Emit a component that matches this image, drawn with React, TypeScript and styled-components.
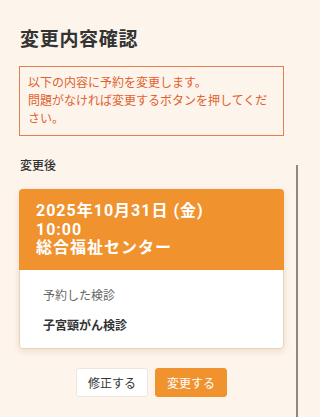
import React, { FC } from 'react';
import styled, { createGlobalStyle } from 'styled-components';

const GlobalStyle = createGlobalStyle`
  html, body {
    margin: 0;
    padding: 0;
    background: #fdf4ec;
  }
  body {
    font-family: "Roboto", "Noto Sans CJK JP", sans-serif;
    color: #333333;
  }
`;

interface ReservationCardProps {
  date: string;
  time: string;
  place: string;
  label: string;
  exam: string;
}

const ReservationCard: FC<ReservationCardProps> = ({ date, time, place, label, exam }) => {
  return (
    <Card>
      <CardHeader>
        <HeaderLine>{date}</HeaderLine>
        <HeaderLine>{time}</HeaderLine>
        <HeaderLine>{place}</HeaderLine>
      </CardHeader>
      <CardBody>
        <BodyLabel>{label}</BodyLabel>
        <BodyValue>{exam}</BodyValue>
      </CardBody>
    </Card>
  );
};

const App: FC = () => {
  return (
    <>
      <GlobalStyle />
      <Page>
        <Title>変更内容確認</Title>
        <Notice>
          以下の内容に予約を変更します。
          <br />
          問題がなければ変更するボタンを押してください。
        </Notice>
        <SectionLabel>変更後</SectionLabel>
        <ReservationCard
          date="2025年10月31日 (金)"
          time="10:00"
          place="総合福祉センター"
          label="予約した検診"
          exam="子宮頸がん検診"
        />
        <ButtonRow>
          <Button>修正する</Button>
          <Button primary>変更する</Button>
        </ButtonRow>
        <ScrollThumb />
      </Page>
    </>
  );
};

const Page = styled.div`
  position: relative;
  display: flex;
  flex-direction: column;
  width: 300px;
  min-height: 417px;
  padding: 26px 16px 20px 19px;
  box-sizing: border-box;
  overflow: hidden;
`;

const Title = styled.h1`
  margin: 0 0 16px 1px;
  font-size: 19px;
  line-height: 24px;
  letter-spacing: 0.7px;
  font-weight: 700;
  color: #333333;
  font-family: "Noto Sans CJK JP", sans-serif;
`;

const Notice = styled.p`
  margin: 0;
  padding: 6px 8px 8px 8px;
  border: 1px solid #e2804f;
  font-size: 12px;
  line-height: 18px;
  color: #e0612c;
  font-family: "Noto Sans CJK JP", sans-serif;
`;

const SectionLabel = styled.h2`
  margin: 20px 0 15px 1px;
  font-size: 12px;
  line-height: 18px;
  font-weight: 500;
  color: #333333;
  font-family: "Noto Sans CJK JP", sans-serif;
`;

const Card = styled.div`
  display: flex;
  flex-direction: column;
  border-radius: 4px;
  overflow: hidden;
  background: #ffffff;
  box-shadow: 0 2px 6px rgba(160, 110, 60, 0.18);
`;

const CardHeader = styled.div`
  display: flex;
  flex-direction: column;
  padding: 13px 16px 12px 17px;
  background: #f0922e;
`;

const HeaderLine = styled.div`
  font-size: 16px;
  line-height: 18.5px;
  letter-spacing: 1px;
  font-weight: 700;
  color: #ffffff;
`;

const CardBody = styled.div`
  display: flex;
  flex-direction: column;
  gap: 12px;
  padding: 16px 16px 14px 23px;
  border: 1px solid #ead2b5;
  border-top: none;
  border-radius: 0 0 4px 4px;
  font-family: "Noto Sans CJK JP", sans-serif;
`;

const BodyLabel = styled.div`
  font-size: 12px;
  line-height: 18px;
  color: #666666;
`;

const BodyValue = styled.div`
  font-size: 12px;
  line-height: 18px;
  font-weight: 700;
  color: #333333;
`;

const ButtonRow = styled.div`
  display: flex;
  justify-content: center;
  gap: 7px;
  margin-top: 19px;
`;

const Button = styled.button<{ primary?: boolean }>`
  width: 72px;
  height: 29px;
  padding: 0;
  border-radius: 3px;
  border: 1px solid ${(p) => (p.primary ? '#f0922e' : '#ece6e0')};
  background: ${(p) => (p.primary ? '#f0922e' : '#ffffff')};
  color: ${(p) => (p.primary ? '#ffffff' : '#333333')};
  font-family: "Noto Sans CJK JP", sans-serif;
  font-size: 12px;
  cursor: pointer;
`;

const ScrollThumb = styled.div`
  position: absolute;
  top: 165px;
  bottom: 0;
  right: 2px;
  width: 2px;
  background: #8c8884;
`;

export default App;
